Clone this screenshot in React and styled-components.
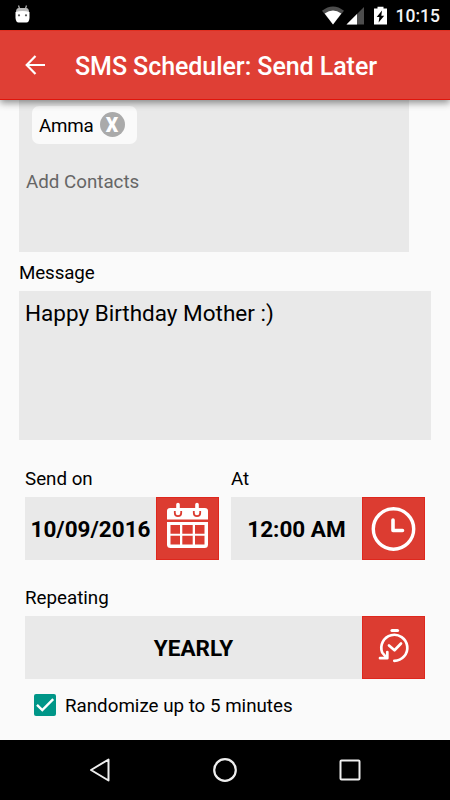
import React, { useState } from 'react';
import styled, { createGlobalStyle } from 'styled-components';

const GlobalStyle = createGlobalStyle`
    * {
        box-sizing: border-box;
    }

    body {
        margin: 0;
        background: #fafafa;
        font-family: Roboto, sans-serif;
    }
`;

const Screen = styled.div`
    width: 450px;
    height: 800px;
    display: flex;
    flex-direction: column;
    overflow: hidden;
    color: #000;
    background: #fafafa;
`;

const StatusBar = styled.div`
    height: 30px;
    padding: 0 10px 0 15px;
    display: flex;
    align-items: center;
    justify-content: space-between;
    flex-shrink: 0;
    background: #000;
`;

const StatusIcons = styled.div`
    display: flex;
    align-items: center;
`;

const Clock = styled.span`
    margin-left: 9px;
    padding-top: 2px;
    color: #f4f4f4;
    font-size: 17.5px;
    font-weight: 500;
    line-height: 28px;
`;

const Header = styled.header`
    height: 70px;
    padding-left: 25px;
    display: flex;
    align-items: center;
    flex-shrink: 0;
    z-index: 1;
    background: #df3f35;
    border-top: 1px solid #e03021;
    border-bottom: 1px solid #e0150c;
    box-shadow: 0 3px 7px rgba(0, 0, 0, .42);
`;

const Title = styled.h1`
    margin: 4px 0 0 30px;
    color: #fff;
    font-size: 25px;
    font-weight: 500;
    letter-spacing: -.06px;
    line-height: 30px;
`;

const Form = styled.main`
    flex: 1;
    padding: 0 19px;
`;

const Contacts = styled.section`
    width: 390px;
    height: 152px;
    padding: 6px 7px 0;
    background: #e9e9e9;
`;

const Chip = styled.span`
    width: 105px;
    height: 38px;
    margin-left: 6px;
    padding: 2px 0 0 7px;
    display: flex;
    align-items: center;
    background: #fafafa;
    border-radius: 7px;
    font-size: 18.75px;
    letter-spacing: -.2px;
`;

const Remove = styled.button`
    width: 25px;
    height: 25px;
    margin: -3px 0 0 6px;
    padding: 0;
    border: none;
    border-radius: 50%;
    color: #fff;
    background: #aaa;
    font: 900 19.5px/27px Roboto, sans-serif;
`;

const Placeholder = styled.p`
    margin: 26px 0 0;
    color: #666;
    font-size: 18.75px;
    line-height: 24px;
`;

const Label = styled.label`
    display: block;
    font-size: 18.75px;
    line-height: 24px;
`;

const MessageLabel = styled(Label)`
    padding: 9px 0 6px;
    letter-spacing: -.1px;
`;

const Message = styled.section`
    width: 412px;
    height: 149px;
    padding: 8px 6px;
    background: #e9e9e9;
    font-size: 22.5px;
    line-height: 28px;
`;

const Fields = styled.section`
    padding: 27px 6px 0;
    display: grid;
    grid-template-columns: 194px 194px;
    column-gap: 12px;
    row-gap: 26px;
`;

const Field = styled.div`
    grid-column: ${props => props.$wide ? 'span 2' : 'auto'};
`;

const Picker = styled.div`
    height: 63px;
    margin-top: 6px;
    display: flex;
`;

const Value = styled.div`
    flex: 1;
    display: flex;
    align-items: center;
    justify-content: center;
    background: #e9e9e9;
    font-size: 22.5px;
    font-weight: 700;
    white-space: nowrap;
`;

const PickerButton = styled.button`
    width: 63px;
    height: 63px;
    padding: 0;
    display: flex;
    background: #dc3c31;
    border: 1px solid #df271d;
`;

const Randomize = styled.label`
    margin: 15px 0 0 15px;
    display: flex;
    align-items: center;
    font-size: 18.75px;
    line-height: 24px;
`;

const Checkbox = styled.span`
    width: 22px;
    height: 22px;
    margin: -2px 9px 0 0;
    display: flex;
    background: ${props => props.$checked ? '#009688' : '#757575'};
    border-radius: 2px;
`;

const NavBar = styled.nav`
    height: 60px;
    display: flex;
    align-items: center;
    justify-content: space-between;
    flex-shrink: 0;
    padding: 0 87px;
    background: #000;
`;

const AndroidIcon = () => (
    <svg width="15" height="21" viewBox="0 1 15 21">
        <path d="M3.5 1.5 L5 6 M11.5 1.5 L10 6" stroke="#aaa" strokeWidth="1.3" />
        <path d="M1 8 Q1 4 4 4 H11 Q14 4 14 8 Z" fill="#bbb" />
        <path d="M.5 8 Q7.5 6 14.5 8 V14 Q14 18.5 11.5 18.5 H3.5 Q1 18.5 .5 14 Z" fill="#fff" />
        <circle cx="4" cy="11.3" r="1.1" fill="#555" />
        <circle cx="11" cy="11.3" r="1.1" fill="#555" />
    </svg>
);

const SignalIcons = () => (
    <svg width="65" height="19" viewBox="0 0 65 19">
        <path d="M0 4.8 Q11 -3.8 22 4.8 L11 18.5 Z" fill="#4d4d4d" />
        <path d="M2.7 7.5 Q11 1.5 19.3 7.5 L11 18.5 Z" fill="#fff" />
        <path d="M24.5 18.5 L42 1 V18.5 Z" fill="#4d4d4d" />
        <path d="M24.5 18.5 L35 8 V18.5 Z" fill="#fff" />
        <path d="M52 2.5 H55.5 V.8 H61.5 V2.5 H65 V18.5 H52 Z" fill="#fff" />
        <path d="M60 4.5 L54.7 11 H57.4 L56.6 16.5 L62.2 9.8 H59.3 Z" fill="#000" />
    </svg>
);

const BackIcon = () => (
    <svg width="20" height="20" viewBox="0 0 20 20">
        <path d="M20 10 H2 M10.5 1 L1.7 10 L10.5 19" fill="none" stroke="#fff" strokeWidth="2.2" />
    </svg>
);

const CalendarIcon = () => (
    <svg width="61" height="61" viewBox="0 0 61 61">
        <path d="M10 21.5 V13 Q10 10 13 10 H48 Q51 10 51 13 V21.5 Z" fill="#fff" />
        <path d="M10 24 H51 V46.5 Q51 50 47.5 50 H13.5 Q10 50 10 46.5 Z" fill="#fff" />
        <path fill="#dc3c31" d="M13.5 27h9.5v8.8h-9.5z M25.3 27h10.4v8.8h-10.4z M38 27h9.5v8.8H38z M13.5 37.7h9.5v8.8h-9.5z M25.3 37.7h10.4v8.8h-10.4z M38 37.7h9.5v8.8H38z" />
        <path d="M17.8 13 V15 A3.2 3.2 0 0 0 24.2 15 V13 M36.8 13 V15 A3.2 3.2 0 0 0 43.2 15 V13" fill="none" stroke="#dc3c31" strokeWidth="1.8" />
        <path d="M21 6.5 V14.5 M40 6.5 V14.5" stroke="#fff" strokeWidth="3.6" strokeLinecap="round" />
    </svg>
);

const ClockIcon = () => (
    <svg width="61" height="61" viewBox="0 0 61 61" fill="none" stroke="#fff">
        <circle cx="30.5" cy="31" r="20.2" strokeWidth="3.4" />
        <path d="M30 22 V32.5 H39.5" strokeWidth="3.6" strokeLinecap="round" strokeLinejoin="round" />
    </svg>
);

const RepeatIcon = () => (
    <svg width="61" height="61" viewBox="0 0 61 61" fill="none" stroke="#fff" strokeWidth="2.7" strokeLinecap="round" strokeLinejoin="round">
        <path d="M29 13.5 H34.5" strokeWidth="3.2" />
        <path d="M31.3 43.8 A13 13 0 1 0 19.2 35.5 L23.3 40.5" />
        <path d="M24.3 35 V41.2 H17" />
        <path d="M26 28.5 L31.5 33.3 L38 26.5" />
    </svg>
);

const CheckIcon = () => (
    <svg width="22" height="22" viewBox="0 0 22 22">
        <path d="M3 10.8 L8.3 16 L19.2 5.2" fill="none" stroke="#fff" strokeWidth="2.4" />
    </svg>
);

function App() {
    const [randomize, setRandomize] = useState(true);

    return (
        <Screen>
            <GlobalStyle />
            <StatusBar>
                <AndroidIcon />
                <StatusIcons>
                    <SignalIcons />
                    <Clock>10:15</Clock>
                </StatusIcons>
            </StatusBar>
            <Header>
                <BackIcon />
                <Title>SMS Scheduler: Send Later</Title>
            </Header>
            <Form>
                <Contacts>
                    <Chip>Amma <Remove>X</Remove></Chip>
                    <Placeholder>Add Contacts</Placeholder>
                </Contacts>
                <MessageLabel>Message</MessageLabel>
                <Message>Happy Birthday Mother :)</Message>
                <Fields>
                    <Field>
                        <Label>Send on</Label>
                        <Picker>
                            <Value>10/09/2016</Value>
                            <PickerButton><CalendarIcon /></PickerButton>
                        </Picker>
                    </Field>
                    <Field>
                        <Label>At</Label>
                        <Picker>
                            <Value>12:00 AM</Value>
                            <PickerButton><ClockIcon /></PickerButton>
                        </Picker>
                    </Field>
                    <Field $wide>
                        <Label>Repeating</Label>
                        <Picker>
                            <Value>YEARLY</Value>
                            <PickerButton><RepeatIcon /></PickerButton>
                        </Picker>
                    </Field>
                </Fields>
                <Randomize onClick={() => setRandomize(!randomize)}>
                    <Checkbox $checked={randomize}>{randomize && <CheckIcon />}</Checkbox>
                    Randomize up to 5 minutes
                </Randomize>
            </Form>
            <NavBar>
                <svg width="26" height="26" viewBox="0 0 26 26">
                    <path d="M21.5 2.5 V23.5 L4 13 Z" fill="none" stroke="#eee" strokeWidth="2" strokeLinejoin="round" />
                </svg>
                <svg width="26" height="26" viewBox="0 0 26 26">
                    <circle cx="13" cy="13" r="10.8" fill="none" stroke="#eee" strokeWidth="2.2" />
                </svg>
                <svg width="26" height="26" viewBox="0 0 26 26">
                    <rect x="3.5" y="3.5" width="19" height="19" rx="1" fill="none" stroke="#eee" strokeWidth="2" />
                </svg>
            </NavBar>
        </Screen>
    )
}

export default App;
